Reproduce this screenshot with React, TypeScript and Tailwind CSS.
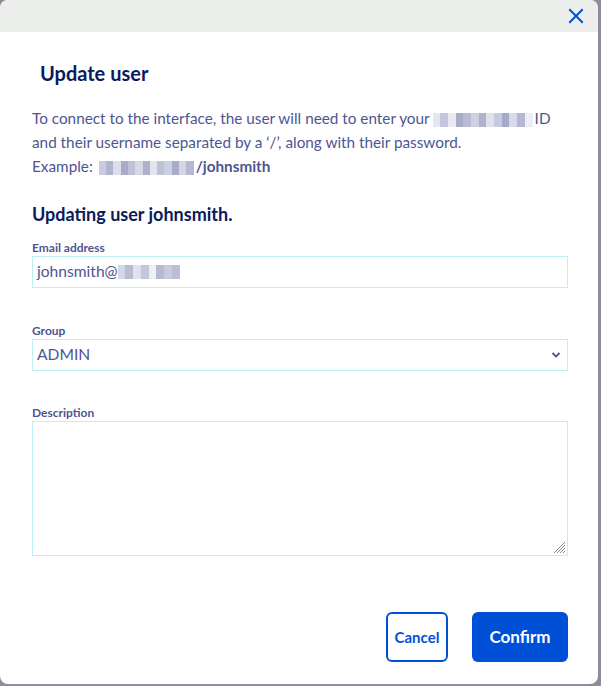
import React from "react";

const Mosaic = ({ w, cols, ml = 1 }: { w: number; cols: string[]; ml?: number }) => (
  <span className="inline-flex align-middle h-[14px]" style={{ width: w, marginLeft: ml, marginRight: 2 }}>
    {cols.map((c, i) => (
      <span key={i} className="flex-1 h-full" style={{ backgroundColor: c }} />
    ))}
  </span>
);

const m1 = ["#e4e5ef", "#c3c5dc", "#e8e9f1", "#a9acc9", "#b8bad3", "#cfd0e3", "#b0b3cd", "#e0e1ec", "#c7c9dd", "#a6a9c7", "#d9dae9", "#b5b8d1", "#eceef4"];
const m2 = ["#c9cbe0", "#b2b5cf", "#dcdde9", "#a7aac8", "#c0c2d8", "#d6d7e7", "#aeb1cc", "#e2e3ee", "#bfc1d7", "#cdd0e2", "#a9acc9", "#d3d5e5", "#b7b9d2"];
const m3 = ["#d6d7e6", "#babcd4", "#e0e1ec", "#c4c6da", "#eeeff5", "#b7b9d2", "#c8cade", "#bcbed5"];

export default function App() {
  return (
    <div className="w-[601px] h-[686px] bg-[#8d8b9c] overflow-hidden" style={{ fontFamily: "Lato, 'Noto Sans', sans-serif" }}>
      <div className="w-[598px] h-[684px] bg-white rounded-[8px] overflow-hidden flex flex-col">
        <div className="h-8 bg-[#eceeeb] flex items-center justify-end pr-[14px] shrink-0">
          <svg width="16" height="16" viewBox="0 0 16 16" className="text-[#0050d7]">
            <path d="M2 2 L14 14 M14 2 L2 14" stroke="currentColor" strokeWidth="2" strokeLinecap="square" fill="none" />
          </svg>
        </div>
        <div className="pl-8 pr-[30px] flex flex-col flex-1">
          <h1 className="pl-2 mt-[29px] text-[20px] font-bold text-[#0b1a5c] leading-[24px]">Update user</h1>
          <p className="mt-[21px] text-[15.3px] leading-[24px] text-[#4d5592]">
            To connect to the interface, the user will need to enter your
            <Mosaic w={100} cols={m1} ml={3} />
            ID
            <br />
            and their username separated by a ‘/’, along with their password.
            <br />
            Example: <Mosaic w={95} cols={m2} ml={2} />
            <span className="font-bold">/johnsmith</span>
          </p>
          <h2 className="mt-[24px] text-[18px] font-bold text-[#0b1a5c] leading-[24px]">Updating user johnsmith.</h2>
          <label className="mt-[14px] text-[12px] font-bold text-[#4d5592] leading-[16px]">Email address</label>
          <div className="mt-0 h-8 border border-[#bdeff6] flex items-center px-[4px] text-[15.6px] text-[#4d5592]">
            johnsmith@<Mosaic w={62} cols={m3} ml={0} />
          </div>
          <label className="mt-[35px] text-[12px] font-bold text-[#4d5592] leading-[16px]">Group</label>
          <div className="mt-0 h-8 border border-[#bdeff6] flex items-center justify-between px-[4px] pr-[6px] text-[15.6px] text-[#4d5592]">
            <span>ADMIN</span>
            <svg width="10" height="8" viewBox="0 0 10 8">
              <path d="M1.5 2 L5 5.5 L8.5 2" stroke="#4d5592" strokeWidth="1.8" fill="none" />
            </svg>
          </div>
          <label className="mt-[34px] text-[12px] font-bold text-[#4d5592] leading-[16px]">Description</label>
          <div className="mt-0 h-[135px] border border-[#bdeff6] relative">
            <svg width="12" height="12" viewBox="0 0 12 12" className="absolute right-[1px] bottom-[1px]">
              <path d="M11 3 L3 11 M11 6 L6 11 M11 9 L9 11 M11 0 L0 11" stroke="#8a8a8a" strokeWidth="1" fill="none" />
            </svg>
          </div>
          <div className="mt-[56px] flex justify-end gap-6">
            <button className="w-[62px] h-[50px] rounded-[6px] border-2 border-[#0050d7] text-[#0050d7] font-bold text-[15px]">Cancel</button>
            <button className="w-[96px] h-[50px] rounded-[6px] bg-[#0050d7] text-white font-bold text-[17px]">Confirm</button>
          </div>
        </div>
      </div>
    </div>
  );
}
